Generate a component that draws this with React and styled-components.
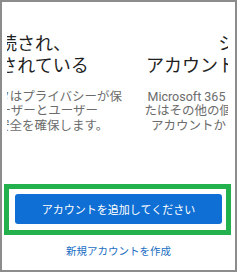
import React from 'react';
import styled, { createGlobalStyle } from 'styled-components';

const GlobalStyle = createGlobalStyle`
  html, body {
    margin: 0;
    padding: 0;
    background: #ffffff;
  }
  body {
    font-family: Roboto, "Noto Sans CJK JP", sans-serif;
  }
`;

// slides of the onboarding carousel, caught mid-swipe
const slides = [
  {
    id: 'privacy',
    title: ['安全に接続され、', '完全に保護されている'],
    body: [
      'Outlook の大切なデータはプライバシーが保',
      '護されており、ユーザーとユーザー',
      'Eメールやデータの安全を確保します。',
    ],
  },
  {
    id: 'accounts',
    title: ['シンプルに', 'アカウントを一括で管理する'],
    body: [
      'Microsoft 365 の職場や学校アカウントま',
      'たはその他の個人用アカウントを追加して',
      'アカウントからメールを管理できます。',
    ],
  },
];

// how far the pager has been swiped
const swipeOffset = -140;

function App() {
  return (
    <>
      <GlobalStyle />
      <Screen>
        <Carousel>
          <Track style={{ transform: `translateX(${swipeOffset}px)` }}>
            {slides.map((s) => (
              <Slide key={s.id}>
                <Title>
                  {s.title.map((line, i) => (
                    <Line key={i}>{line}</Line>
                  ))}
                </Title>
                <Body>
                  {s.body.map((line, i) => (
                    <Line key={i}>{line}</Line>
                  ))}
                </Body>
              </Slide>
            ))}
          </Track>
        </Carousel>
        <Highlight>
          <PrimaryButton>アカウントを追加してください</PrimaryButton>
        </Highlight>
        <LinkButton>新規アカウントを作成</LinkButton>
      </Screen>
    </>
  );
}

const Screen = styled.div`
  width: 237px;
  height: 272px;
  box-sizing: border-box;
  border: 2px solid #8c8c8c;
  background: #ffffff;
  display: flex;
  flex-direction: column;
  overflow: hidden;
`;

const Carousel = styled.div`
  height: 182px;
  margin: 0 7px 0 5px;
  overflow: hidden;
  position: relative;
`;

const Track = styled.div`
  display: flex;
  width: max-content;
`;

const Slide = styled.div`
  width: 264px;
  flex: 0 0 264px;
  padding-top: 31px;
  text-align: center;
  white-space: nowrap;
`;

const Line = styled.div``;

const Title = styled.div`
  font-size: 18px;
  line-height: 22px;
  color: #1f1f1f;
  font-weight: 400;
`;

const Body = styled.div`
  margin-top: 12.5px;
  font-size: 12.5px;
  line-height: 14.5px;
  color: #6c6c6c;
`;

const Highlight = styled.div`
  margin: 0 4px 0 2px;
  border: 5px solid #22b14c;
  padding: 5px 4px 6px 6px;
  background: #ffffff;
`;

const PrimaryButton = styled.button`
  display: block;
  width: 100%;
  height: 30px;
  border: none;
  border-radius: 3px;
  background: #0f6fd4;
  color: #ffffff;
  font-family: Roboto, "Noto Sans CJK JP", sans-serif;
  font-size: 11px;
  padding: 0;
  cursor: pointer;
`;

const LinkButton = styled.button`
  margin-top: 8px;
  align-self: center;
  background: none;
  border: none;
  padding: 0;
  color: #1b6fc4;
  font-family: Roboto, "Noto Sans CJK JP", sans-serif;
  font-size: 10.5px;
  line-height: 17px;
  cursor: pointer;
`;

export default App;
